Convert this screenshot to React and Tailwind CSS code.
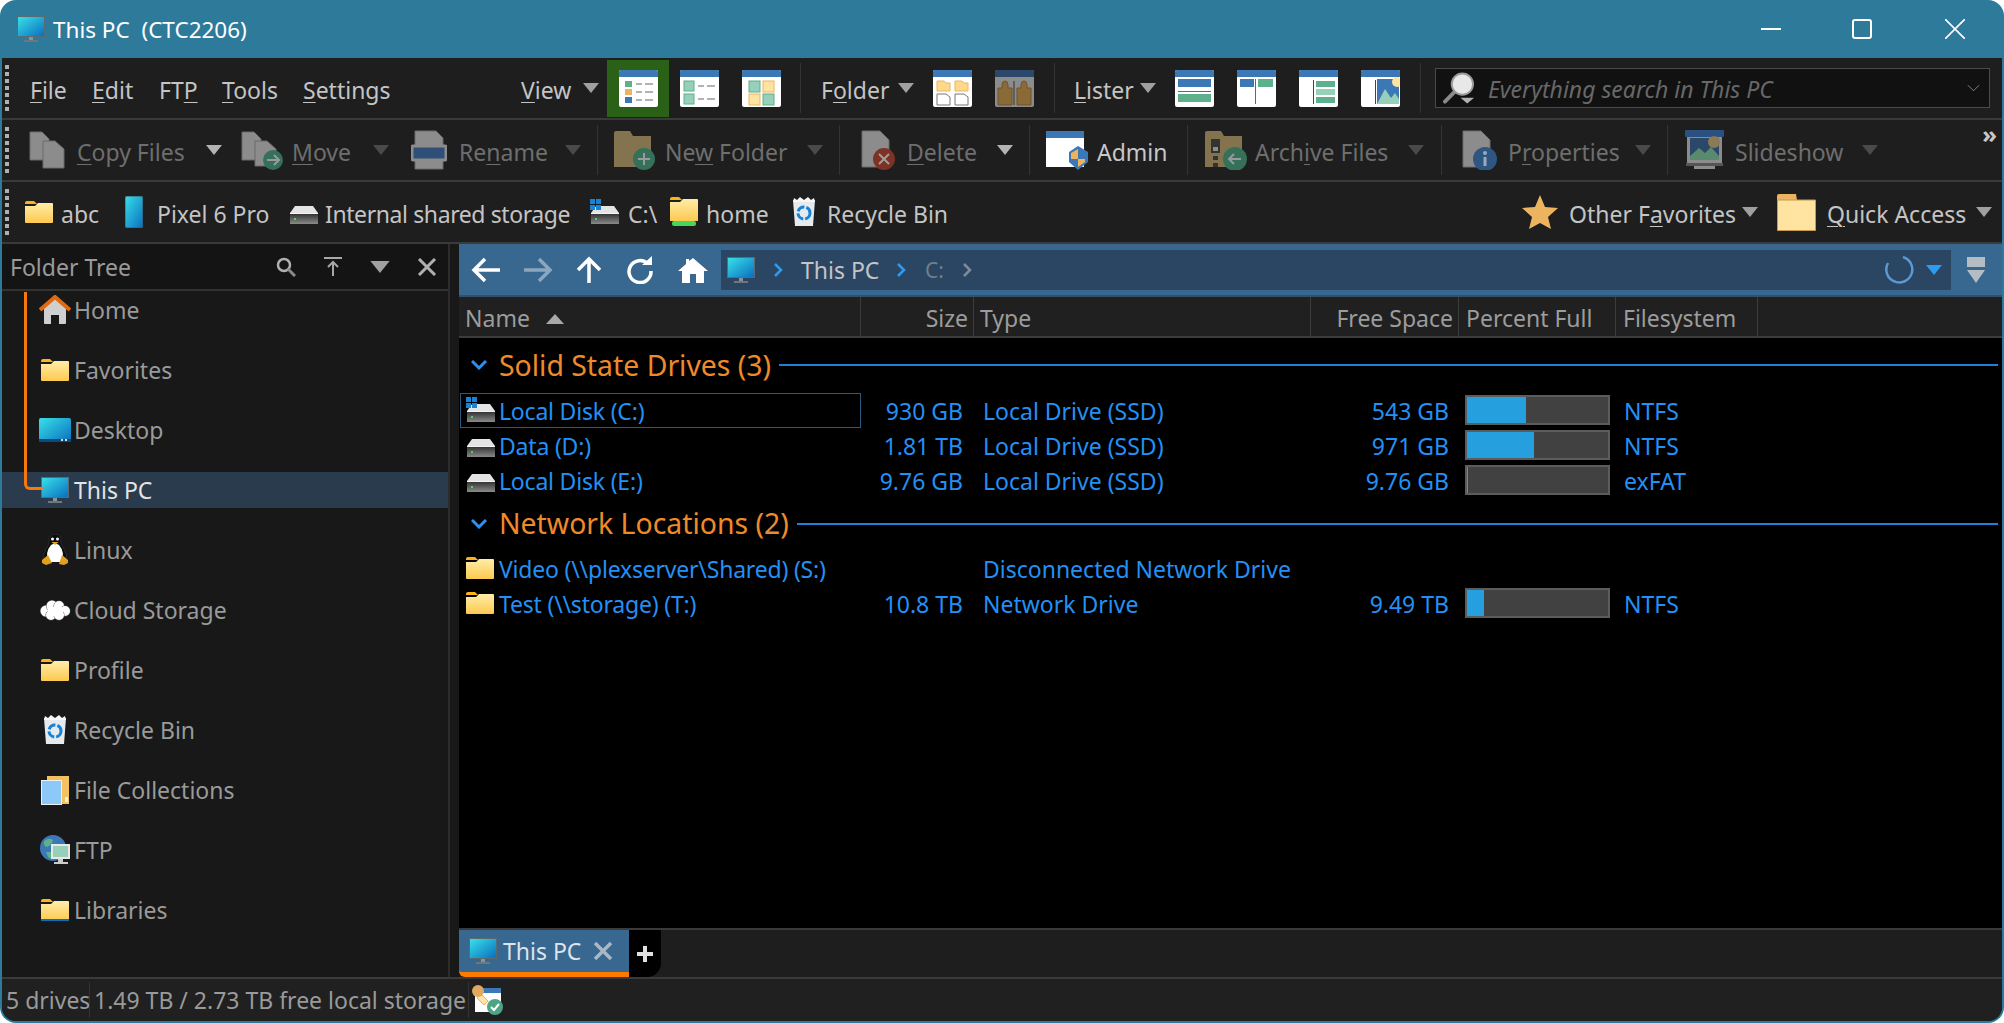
import React from 'react';

const Defs = () => (
  <svg className="absolute w-0 h-0">
    <defs>
      <linearGradient id="screen" x1="0" y1="0" x2="1" y2="1">
        <stop offset="0" stopColor="#38e0e8" />
        <stop offset="1" stopColor="#0a6fc0" />
      </linearGradient>
      <linearGradient id="folder" x1="0" y1="0" x2="0" y2="1">
        <stop offset="0" stopColor="#ffeca8" />
        <stop offset="1" stopColor="#fdc94f" />
      </linearGradient>
      <linearGradient id="drive" x1="0" y1="0" x2="0" y2="1">
        <stop offset="0" stopColor="#2c2c2c" />
        <stop offset="1" stopColor="#8a8a8a" />
      </linearGradient>
    </defs>
  </svg>
);

const Monitor = ({ className = 'w-[28px] h-[28px]' }) => (
  <svg viewBox="0 0 28 28" className={className}>
    <rect x="0" y="1" width="28" height="21" fill="#5a6a72" />
    <rect x="1" y="2" width="26" height="19" fill="url(#screen)" />
    <rect x="12" y="22" width="4" height="3" fill="#8a9298" />
    <rect x="7" y="25" width="14" height="2" fill="#70777c" />
  </svg>
);

const Folder = ({ className = 'w-[28px] h-[22px]', bar }) => (
  <svg viewBox="0 0 28 22" className={className}>
    <path d="M0 2 Q0 0 2 0 H9 L12 3 H0 Z" fill="#fbb31b" />
    <path d="M0 5 H10 L13 2 H27 Q28 2 28 3 V21 Q28 22 27 22 H1 Q0 22 0 21 Z" fill="url(#folder)" />
    {bar && <rect x="0" y="20" width="28" height="2" fill="#0a6fc0" />}
  </svg>
);

const Drive = ({ win }) => (
  <svg viewBox="0 0 30 26" className="w-[30px] h-[26px]">
    <path d="M6 7 H24 L29 14 H1 Z" fill="#e4e4e4" />
    <rect x="1" y="14" width="28" height="11" fill="url(#drive)" />
    <rect x="1" y="14" width="28" height="1" fill="#f4f4f4" />
    <rect x="5" y="19" width="2" height="2" fill="#3fe04f" />
    {win && (
      <g fill="#1583d8">
        <rect x="0" y="0" width="5" height="5" />
        <rect x="6" y="0" width="5" height="5" />
        <rect x="0" y="6" width="5" height="5" />
        <rect x="6" y="6" width="5" height="5" />
      </g>
    )}
  </svg>
);

const Recycle = ({ className = 'w-[24px] h-[30px]' }) => (
  <svg viewBox="0 0 24 30" className={className}>
    <path d="M1 3 H23 L21 29 H3 Z" fill="#e4eaee" />
    <path d="M2 1 L5 3 L8 0 L12 3 L16 0 L19 3 L22 1 L23 5 H1 Z" fill="#f6f6f6" />
    <circle cx="12" cy="16" r="6" fill="none" stroke="#1583d8" strokeWidth="3" strokeDasharray="8 2" />
  </svg>
);

const Tri = ({ color = '#a0a0a0', className = 'w-[16px] h-[10px]' }) => (
  <svg viewBox="0 0 16 10" className={className}>
    <path d="M0 0 H16 L8 10 Z" fill={color} />
  </svg>
);

const Win = ({ children, top = '#3b78b5', body = '#ffffff' }) => (
  <svg viewBox="0 0 39 37" className="w-[39px] h-[37px] shrink-0">
    <rect x="0" y="0" width="39" height="37" rx="2" fill={body} />
    <path d="M0 7 V2 Q0 0 2 0 H37 Q39 0 39 2 V7 Z" fill={top} />
    {children}
  </svg>
);

const dashes = (
  <g stroke="#666" strokeWidth="1">
    <path d="M17 14 H23 M26 14 H34 M17 22 H23 M26 22 H34 M17 30 H23 M26 30 H34" />
  </g>
);

const DetailsIcon = () => (
  <Win>
    <rect x="6" y="11" width="7" height="6" fill="#5cb08c" />
    <rect x="6" y="19" width="7" height="6" fill="#edb45f" />
    <rect x="6" y="27" width="7" height="6" fill="#3b78b5" />
    {dashes}
  </Win>
);

const ListIcon = () => (
  <Win>
    <rect x="4" y="11" width="10" height="10" fill="#97d0b8" stroke="#5cb08c" />
    <rect x="4" y="24" width="10" height="10" fill="#97d0b8" stroke="#5cb08c" />
    <path d="M18 16 H24 M27 16 H35 M18 29 H24 M27 29 H35" stroke="#666" />
  </Win>
);

const TilesIcon = () => (
  <Win>
    <rect x="7" y="11" width="11" height="11" fill="#97d0b8" stroke="#5cb08c" />
    <rect x="21" y="11" width="11" height="11" fill="#ffe3a0" stroke="#edb45f" />
    <rect x="7" y="24" width="11" height="11" fill="#ffe3a0" stroke="#edb45f" />
    <rect x="21" y="24" width="11" height="11" fill="#97d0b8" stroke="#5cb08c" />
  </Win>
);

const DualIcon = () => (
  <Win>
    <path d="M4 11 H11 L13 13 H17 V21 H4 Z" fill="#ffd98a" stroke="#edb45f" />
    <path d="M22 11 H29 L31 13 H35 V21 H22 Z" fill="#ffd98a" stroke="#edb45f" />
    <path d="M4 24 H13 L17 27 V35 H4 Z" fill="#fff" stroke="#777" />
    <path d="M22 24 H31 L35 27 V35 H22 Z" fill="#fff" stroke="#777" />
  </Win>
);

const LockIcon = () => (
  <Win top="#2b476a" body="#8c8c8c">
    <path d="M19 11 V35" stroke="#333" />
    <g fill="#8a6a37" stroke="#6f552b">
      <path d="M3 35 V18 H7 V15 Q7 11 10 11 Q13 11 13 15 V18 H17 V35 Z" />
      <path d="M22 35 V18 H26 V15 Q26 11 29 11 Q32 11 32 15 V18 H36 V35 Z" />
    </g>
  </Win>
);

const ListerA = () => (
  <Win>
    <rect x="3" y="9" width="33" height="8" fill="#3b78b5" />
    <rect x="3" y="21" width="33" height="1" fill="#666" />
    <rect x="3" y="24" width="33" height="8" fill="#5cb08c" />
  </Win>
);

const ListerB = () => (
  <Win>
    <rect x="3" y="9" width="14" height="8" fill="#3b78b5" />
    <rect x="21" y="9" width="15" height="8" fill="#5cb08c" />
    <rect x="18" y="9" width="1" height="25" fill="#666" />
  </Win>
);

const ListerC = () => (
  <Win>
    <rect x="14" y="10" width="1" height="24" fill="#444" />
    <rect x="17" y="11" width="19" height="6" fill="#5cb08c" />
    <rect x="17" y="19" width="19" height="6" fill="#97d0b8" />
    <rect x="17" y="27" width="19" height="6" fill="#5cb08c" />
  </Win>
);

const ListerD = () => (
  <Win>
    <rect x="14" y="10" width="1" height="24" fill="#444" />
    <rect x="16" y="9" width="22" height="25" fill="#3b78b5" />
    <circle cx="36" cy="12" r="5" fill="#ffe3a0" />
    <path d="M16 34 L24 19 L30 28 L34 23 L38 29 V34 Z" fill="#97d0b8" />
  </Win>
);

const Sheet = ({ children, w = 36 }) => (
  <svg viewBox={`0 0 ${w} 40`} className="shrink-0" style={{ width: w, height: 40 }}>
    {children}
  </svg>
);

const CopyIcon = () => (
  <Sheet>
    <path d="M1 2 H13 L20 9 V30 H1 Z" fill="#8c8c8c" stroke="#6a6a6a" />
    <path d="M14 11 H26 L35 19 V38 H14 Z" fill="#8c8c8c" stroke="#6a6a6a" />
  </Sheet>
);

const MoveIcon = () => (
  <Sheet w={42}>
    <path d="M1 2 H13 L20 9 V30 H1 Z" fill="#8c8c8c" stroke="#6a6a6a" />
    <path d="M14 11 H26 L35 19 V36 H14 Z" fill="#8c8c8c" stroke="#6a6a6a" />
    <circle cx="32" cy="30" r="10" fill="#35705a" />
    <path d="M26 30 H37 M33 25 L38 30 L33 35" stroke="#9a9a9a" strokeWidth="2" fill="none" />
  </Sheet>
);

const RenameIcon = () => (
  <Sheet>
    <path d="M4 1 H25 L32 8 V39 H4 Z" fill="#8c8c8c" stroke="#6a6a6a" />
    <rect x="1" y="16" width="34" height="14" rx="1" fill="#2f4e78" stroke="#8c8c8c" strokeWidth="3" />
  </Sheet>
);

const NewFolderIcon = () => (
  <Sheet w={43}>
    <path d="M1 3 Q1 1 3 1 H17 L20 6 H38 V37 H1 Z" fill="#83744f" />
    <circle cx="31" cy="29" r="11" fill="#35705a" />
    <path d="M31 23 V35 M25 29 H37" stroke="#9a9a9a" strokeWidth="2" />
  </Sheet>
);

const DeleteIcon = () => (
  <Sheet>
    <path d="M1 1 H19 L28 10 V37 H1 Z" fill="#8c8c8c" stroke="#6a6a6a" />
    <circle cx="23" cy="29" r="11" fill="#7c3226" />
    <path d="M18 24 L28 34 M28 24 L18 34" stroke="#a89a96" strokeWidth="2" />
  </Sheet>
);

const AdminIcon = () => (
  <Sheet w={43}>
    <rect x="0" y="1" width="38" height="36" fill="#ffffff" />
    <rect x="0" y="1" width="38" height="7" fill="#3b78b5" />
    <path d="M32 16 L42 22 V32 L32 40 L23 32 V22 Z" fill="#3b78b5" />
    <path d="M32 19 V29 H25 V23 Z M32 29 H39 V32 L32 37 Z" fill="#edb45f" />
  </Sheet>
);

const ArchiveIcon = () => (
  <Sheet w={43}>
    <path d="M1 3 Q1 1 3 1 H17 L20 6 H38 V37 H1 Z" fill="#83744f" />
    <rect x="7" y="9" width="9" height="14" fill="#333" />
    <rect x="9" y="17" width="5" height="4" fill="#8c8c8c" />
    <rect x="9" y="26" width="5" height="4" fill="#333" />
    <rect x="9" y="33" width="5" height="4" fill="#333" />
    <circle cx="31" cy="29" r="12" fill="#35705a" />
    <path d="M37 29 H25 M30 24 L25 29 L30 34" stroke="#9a9a9a" strokeWidth="2" fill="none" />
  </Sheet>
);

const PropsIcon = () => (
  <Sheet>
    <path d="M1 1 H19 L28 10 V37 H1 Z" fill="#8c8c8c" stroke="#6a6a6a" />
    <circle cx="23" cy="29" r="12" fill="#2f5680" />
    <rect x="21.5" y="27" width="3" height="9" fill="#9ab" />
    <circle cx="23" cy="23" r="2" fill="#9ab" />
  </Sheet>
);

const SlideIcon = () => (
  <Sheet w={39}>
    <rect x="0" y="0" width="39" height="7" rx="1" fill="#2b5080" />
    <rect x="2" y="7" width="35" height="26" fill="#8c8c8c" />
    <rect x="5" y="8" width="29" height="22" fill="#2b476a" />
    <circle cx="29" cy="12" r="6" fill="#8a7a55" />
    <path d="M5 30 V26 L14 18 L20 23 L26 17 L34 26 V30 Z" fill="#5a8a6e" />
    <rect x="1" y="33" width="37" height="3" fill="#555" />
    <rect x="9" y="36" width="21" height="3" fill="#8c8c8c" />
  </Sheet>
);

const Grip = () => (
  <div className="ml-[3px] w-[4px] h-[46px] shrink-0 flex flex-col justify-between">
    {[0, 1, 2, 3, 4, 5, 6].map((i) => (
      <span key={i} className="block w-[4px] h-[4px] bg-[#b0b0b0]" />
    ))}
  </div>
);

const Sep = ({ className }) => <div className={`w-px h-[50px] bg-[#333333] shrink-0 ${className}`} />;

// underlines the mnemonic character at position m
const Label = ({ text, m }) => {
  if (m === undefined) return <span className="inline-block pt-[4px]">{text}</span>;
  return (
    <span className="inline-block pt-[4px]">
      {text.slice(0, m)}
      <u className="underline underline-offset-[3px] decoration-1">{text[m]}</u>
      {text.slice(m + 1)}
    </span>
  );
};

const Tool = ({ icon, text, m, className, gap = 'ml-[12px]', arrow }) => (
  <div className={`flex items-center shrink-0 text-[#6e6e6e] ${className}`}>
    {icon}
    <span className={`${gap} whitespace-nowrap`}>
      <Label text={text} m={m} />
    </span>
    {arrow && <span className="ml-auto"><Tri color={arrow} /></span>}
  </div>
);

const MenuBar = () => (
  <div className="h-[62px] flex items-center border-b-2 border-[#3a3a3a] text-[23px] text-[#c4c4c4]">
    <Grip />
    <span className="ml-[21px] w-[62px]"><Label text="File" m={0} /></span>
    <span className="w-[67px]"><Label text="Edit" m={0} /></span>
    <span className="w-[63px]"><Label text="FTP" m={2} /></span>
    <span className="w-[81px]"><Label text="Tools" m={0} /></span>
    <span className="w-[218px]"><Label text="Settings" m={0} /></span>
    <span className="w-[62px]"><Label text="View" m={0} /></span>
    <span className="w-[24px]"><Tri /></span>
    <div className="w-[62px] h-[57px] bg-[#2a6116] flex items-center justify-center"><DetailsIcon /></div>
    <div className="ml-[11px]"><ListIcon /></div>
    <div className="ml-[23px]"><TilesIcon /></div>
    <Sep className="ml-[19px]" />
    <span className="ml-[20px] w-[77px]"><Label text="Folder" m={1} /></span>
    <span><Tri /></span>
    <div className="ml-[19px]"><DualIcon /></div>
    <div className="ml-[23px]"><LockIcon /></div>
    <Sep className="ml-[20px]" />
    <span className="ml-[19px] w-[66px]"><Label text="Lister" m={0} /></span>
    <span><Tri /></span>
    <div className="ml-[19px]"><ListerA /></div>
    <div className="ml-[23px]"><ListerB /></div>
    <div className="ml-[23px]"><ListerC /></div>
    <div className="ml-[23px]"><ListerD /></div>
    <Sep className="ml-[20px]" />
    <div className="ml-[14px] w-[555px] h-[40px] bg-[#111111] border border-[#4a4a4a] flex items-center">
      <svg viewBox="0 0 34 34" className="ml-[6px] w-[33px] h-[34px]">
        <path d="M3 31 L14 20" stroke="#8a8a8a" strokeWidth="4" strokeLinecap="round" />
        <circle cx="21" cy="13" r="11" fill="#e8e8e8" stroke="#9a9a9a" strokeWidth="2" />
        <path d="M19 27 H33 L26 33 Z" fill="#b0b0b0" />
      </svg>
      <span className="ml-[13px] pt-[2px] italic text-[#686868] text-[23px]">Everything search in This PC</span>
      <svg viewBox="0 0 14 8" className="ml-auto mr-[9px] w-[13px] h-[8px]">
        <path d="M1 1 L7 7 L13 1" stroke="#8a8a8a" fill="none" />
      </svg>
    </div>
  </div>
);

const ActionBar = () => (
  <div className="h-[62px] flex items-center border-b-2 border-[#3a3a3a] text-[23px] relative">
    <Grip />
    <Tool className="ml-[20px] w-[193px]" icon={<CopyIcon />} text="Copy Files" m={0} arrow="#b4b4b4" />
    <Tool className="ml-[19px] w-[148px]" gap="ml-[9px]" icon={<MoveIcon />} text="Move" m={0} arrow="#4a4a4a" />
    <Tool className="ml-[22px] w-[170px]" icon={<RenameIcon />} text="Rename" m={2} arrow="#4a4a4a" />
    <Sep className="ml-[16px]" />
    <Tool className="ml-[15px] w-[210px]" gap="ml-[9px]" icon={<NewFolderIcon />} text="New Folder" m={2} arrow="#4a4a4a" />
    <Sep className="ml-[16px]" />
    <Tool className="ml-[21px] w-[152px]" gap="ml-[10px]" icon={<DeleteIcon />} text="Delete" m={0} arrow="#b4b4b4" />
    <Sep className="ml-[16px]" />
    <div className="ml-[16px] w-[141px] flex items-center text-[#c8c8c8]">
      <AdminIcon />
      <span className="ml-[8px]"><Label text="Admin" /></span>
    </div>
    <Sep />
    <Tool className="ml-[16px] w-[220px]" gap="ml-[8px]" icon={<ArchiveIcon />} text="Archive Files" m={4} arrow="#4a4a4a" />
    <Sep className="ml-[17px]" />
    <Tool className="ml-[20px] w-[189px]" gap="ml-[10px]" icon={<PropsIcon />} text="Properties" m={1} arrow="#4a4a4a" />
    <Sep className="ml-[16px]" />
    <Tool className="ml-[17px] w-[193px]" gap="ml-[11px]" icon={<SlideIcon />} text="Slideshow" arrow="#4a4a4a" />
    <span className="absolute right-[5px] top-[2px] text-[#c8c8c8] text-[24px] leading-none font-bold">»</span>
  </div>
);

const Fav = ({ icon, text, className, gap = 'ml-[8px]' }) => (
  <div className={`flex items-center shrink-0 ${className}`}>
    {icon}
    <span className={gap}><Label text={text} /></span>
  </div>
);

const FavBar = () => (
  <div className="h-[62px] flex items-center text-[23px] text-[#c4c4c4] border-b-2 border-[#3a3a3a]">
    <Grip />
    <Fav className="ml-[16px] w-[100px]" icon={<Folder />} text="abc" />
    <Fav className="w-[164px]" icon={
      <svg viewBox="0 0 18 32" className="w-[18px] h-[32px] mr-[6px]">
        <rect x="0" y="0" width="18" height="32" rx="2" fill="url(#screen)" stroke="#455" />
      </svg>
    } text="Pixel 6 Pro" />
    <Fav className="w-[301px] tracking-[-0.4px]" gap="ml-[6px]" icon={<Drive />} text="Internal shared storage" />
    <Fav className="w-[80px]" icon={<Drive win />} text="C:\" />
    <Fav className="w-[122px]" icon={
      <svg viewBox="0 0 28 30" className="w-[28px] h-[30px]">
        <path d="M0 2 Q0 0 2 0 H9 L12 3 H0 Z" fill="#fbb31b" />
        <path d="M0 5 H10 L13 2 H27 Q28 2 28 3 V24 H0 Z" fill="url(#folder)" />
        <rect x="2" y="24" width="24" height="5" rx="2" fill="#45d65a" />
      </svg>
    } text="home" />
    <Fav icon={<Recycle />} gap="ml-[11px]" text="Recycle Bin" />
    <div className="ml-auto flex items-center">
      <svg viewBox="0 0 38 36" className="w-[38px] h-[36px]">
        <path d="M19 1 L24 13 L37 14 L27 23 L30 35 L19 29 L8 35 L11 23 L1 14 L14 13 Z" fill="#ecb45f" />
      </svg>
      <span className="ml-[10px] w-[173px] whitespace-nowrap"><Label text="Other Favorites" m={7} /></span>
      <span><Tri /></span>
      <svg viewBox="0 0 39 38" className="ml-[19px] w-[39px] h-[38px]">
        <path d="M0 3 Q0 1 2 1 H19 L20 7 H0 Z" fill="#ecb45f" />
        <path d="M0.5 7 H20 V7 H38.5 V37.5 H0.5 Z" fill="#ffe3a0" stroke="#c89a4e" />
      </svg>
      <span className="ml-[11px] w-[149px] whitespace-nowrap"><Label text="Quick Access" m={0} /></span>
      <span className="mr-[10px]"><Tri /></span>
    </div>
  </div>
);

const PenguinIcon = () => (
  <svg viewBox="0 0 28 32" className="w-[28px] h-[32px]">
    <path d="M14 0 Q20 0 20 8 Q20 11 23 15 Q27 21 25 27 L3 27 Q1 21 5 15 Q8 11 8 8 Q8 0 14 0 Z" fill="#0c0c0c" stroke="#2a2a2a" />
    <path d="M10 11 Q14 8 18 11 Q24 18 21 28 L7 28 Q4 18 10 11 Z" fill="#ffffff" />
    <circle cx="11.5" cy="5" r="1.5" fill="#ffffff" />
    <circle cx="16.5" cy="5" r="1.5" fill="#ffffff" />
    <path d="M10.5 8 H17.5 L14 11 Z" fill="#e8a020" />
    <path d="M1 26 L7 21 L11 29 L5 31 L1 29 Z M27 26 L21 21 L18 30 L23 31 L27 29 Z" fill="#e0a020" />
  </svg>
);

const TreeIcons = {
  home: (
    <svg viewBox="0 0 32 30" className="w-[32px] h-[30px]">
      <path d="M5 13 L16 3 L27 13 V28 Q27 29 26 29 H20 V20 H12 V29 H6 Q5 29 5 28 Z" fill="#cfcfcf" />
      <path d="M1 15 L16 2 L31 15" fill="none" stroke="#e06a10" strokeWidth="4" />
    </svg>
  ),
  folder: <Folder />,
  desktop: (
    <svg viewBox="0 0 32 24" className="w-[32px] h-[24px]">
      <rect x="0" y="0" width="32" height="24" rx="2" fill="url(#screen)" />
      <rect x="0" y="21" width="32" height="3" fill="#0a4a80" />
      <rect x="22" y="21" width="2" height="2" fill="#ddd" />
      <rect x="26" y="21" width="2" height="2" fill="#ddd" />
    </svg>
  ),
  pc: <Monitor />,
  linux: <PenguinIcon />,
  cloud: (
    <svg viewBox="0 0 32 22" className="w-[32px] h-[22px]">
      <g fill="#ffffff" stroke="#555555" strokeWidth="1" paintOrder="stroke">
        <circle cx="7" cy="12" r="5.5" />
        <circle cx="13" cy="7" r="5.5" />
        <circle cx="20" cy="7" r="5" />
        <circle cx="26" cy="12" r="5" />
        <circle cx="12" cy="16" r="5" />
        <circle cx="20" cy="16" r="5" />
      </g>
      <rect x="9" y="8" width="15" height="9" fill="#ffffff" />
    </svg>
  ),
  recycle: <Recycle />,
  collections: (
    <svg viewBox="0 0 28 30" className="w-[28px] h-[30px]">
      <rect x="6" y="1" width="22" height="28" fill="#f3c15f" />
      <rect x="0.5" y="5.5" width="20" height="24" fill="#8cc8f8" stroke="#f0f0f0" />
      <rect x="24" y="22" width="3" height="5" fill="#f0f0f0" />
    </svg>
  ),
  ftp: (
    <svg viewBox="0 0 32 30" className="w-[32px] h-[30px]">
      <circle cx="14" cy="13" r="13" fill="#3b78b5" />
      <path d="M5 6 Q10 2 14 5 Q13 10 8 12 Q4 11 5 6 Z M7 17 L12 17 L12 24 L9 22 Z" fill="#5cb08c" />
      <rect x="12" y="9" width="19" height="15" fill="#e8e8e8" />
      <rect x="14" y="11" width="15" height="11" fill="#97d0b8" />
      <rect x="19" y="24" width="5" height="3" fill="#ccc" />
      <rect x="15" y="27" width="14" height="2" fill="#ccc" />
    </svg>
  ),
  libraries: <Folder className="w-[28px] h-[24px]" bar />,
};

const treeItems = [
  ['home', 'Home'],
  ['folder', 'Favorites'],
  ['desktop', 'Desktop'],
  ['pc', 'This PC'],
  ['linux', 'Linux'],
  ['cloud', 'Cloud Storage'],
  ['folder', 'Profile'],
  ['recycle', 'Recycle Bin'],
  ['collections', 'File Collections'],
  ['ftp', 'FTP'],
  ['libraries', 'Libraries'],
];

const FolderTree = () => (
  <div className="w-[448px] shrink-0 flex flex-col border-r-2 border-[#2c2c2c] bg-[#181818]">
    <div className="h-[47px] shrink-0 flex items-center bg-[#141414] text-[23px] text-[#9a9a9a] border-b-2 border-[#333333] pl-[8px]">
      <span className="pt-[2px]">Folder Tree</span>
      <svg viewBox="0 0 20 20" className="ml-auto w-[20px] h-[20px]">
        <circle cx="8" cy="8" r="6" fill="none" stroke="#b0b0b0" strokeWidth="2.5" />
        <path d="M12 12 L19 19" stroke="#8a8a8a" strokeWidth="3" />
      </svg>
      <svg viewBox="0 0 18 20" className="ml-[28px] w-[18px] h-[20px]">
        <path d="M0 1 H18 M9 19 V6 M4 10 L9 5 L14 10" stroke="#a8a8a8" strokeWidth="2" fill="none" />
      </svg>
      <span className="ml-[27px]"><Tri className="w-[22px] h-[12px]" /></span>
      <svg viewBox="0 0 20 18" className="ml-[26px] mr-[11px] w-[20px] h-[18px]">
        <path d="M2 1 L18 17 M18 1 L2 17" stroke="#b0b0b0" strokeWidth="3" />
      </svg>
    </div>
    <div className="relative flex-1 flex flex-col gap-6 pt-[1px] text-[23px] text-[#9a9a9a]">
      {treeItems.map(([icon, label]) => (
        <div key={label} className={`h-[36px] flex items-center shrink-0 ${label === 'This PC' ? 'bg-[#2a3b4d] text-[#e4e4e4]' : ''}`}>
          <span className="ml-[37px] w-[32px] flex justify-center">{TreeIcons[icon]}</span>
          <span className="ml-[3px]">{label}</span>
        </div>
      ))}
      <div className="absolute left-[22px] top-[1px] w-[19px] h-[198px] border-l-[3px] border-b-[3px] border-[#f47a10] rounded-bl-md" />
    </div>
  </div>
);

const NavBar = () => (
  <div className="h-[53px] shrink-0 bg-[#38678f] flex items-center border-b-2 border-[#33506a]">
    <svg viewBox="0 0 30 28" className="ml-[12px] w-[30px] h-[28px]">
      <path d="M14 3 L3 14 L14 25 M3 14 H29" fill="none" stroke="#ffffff" strokeWidth="3.5" />
    </svg>
    <svg viewBox="0 0 30 28" className="ml-[22px] w-[30px] h-[28px]">
      <path d="M16 3 L27 14 L16 25 M27 14 H1" fill="none" stroke="#8ba7c0" strokeWidth="3.5" />
    </svg>
    <svg viewBox="0 0 28 28" className="ml-[22px] w-[28px] h-[28px]">
      <path d="M3 14 L14 3 L25 14 M14 3 V27" fill="none" stroke="#ffffff" strokeWidth="3.5" />
    </svg>
    <svg viewBox="0 0 28 28" className="ml-[23px] w-[28px] h-[28px]">
      <path d="M22 8 A11 11 0 1 0 25 15" fill="none" stroke="#ffffff" strokeWidth="3.5" />
      <path d="M16 9 H26 V0 Z" fill="#ffffff" />
    </svg>
    <svg viewBox="0 0 30 28" className="ml-[24px] w-[30px] h-[28px]">
      <path d="M15 2 L30 15 H26 V27 H18 V18 H12 V27 H4 V15 H0 L8 8 V3 H11 V5 Z" fill="#ffffff" />
    </svg>
    <div className="ml-[13px] w-[1230px] h-[40px] bg-[#2a4663] flex items-center text-[23px]">
      <span className="ml-[6px]"><Monitor /></span>
      <svg viewBox="0 0 9 14" className="ml-[19px] w-[9px] h-[14px]">
        <path d="M1 1 L7 7 L1 13" fill="none" stroke="#2e9bf0" strokeWidth="2.5" />
      </svg>
      <span className="ml-[18px] w-[96px] pt-[2px] text-[#c4c4c4]">This PC</span>
      <svg viewBox="0 0 9 14" className="w-[9px] h-[14px]">
        <path d="M1 1 L7 7 L1 13" fill="none" stroke="#2e9bf0" strokeWidth="2.5" />
      </svg>
      <span className="ml-[19px] w-[38px] pt-[2px] text-[#6e7f8f] text-[21px]">C:</span>
      <svg viewBox="0 0 9 14" className="w-[9px] h-[14px]">
        <path d="M1 1 L7 7 L1 13" fill="none" stroke="#7c8c9c" strokeWidth="2.5" />
      </svg>
      <svg viewBox="0 0 30 30" className="ml-auto mr-[12px] w-[30px] h-[30px]">
        <path d="M19 2 A13 13 0 1 1 4 8" fill="none" stroke="#5a9ad0" strokeWidth="2.5" />
      </svg>
      <span className="mr-[9px]"><Tri color="#2e9bf0" /></span>
    </div>
    <svg viewBox="0 0 18 26" className="ml-[16px] w-[18px] h-[26px]">
      <rect x="0" y="0" width="18" height="10" fill="#b4bcc4" />
      <path d="M0 13 H18 L9 26 Z" fill="#b4bcc4" />
    </svg>
  </div>
);

const gridCols = 'grid grid-cols-[402px_113px_337px_148px_157px_142px_1fr]';

const ColumnHeader = () => (
  <div className={`${gridCols} h-[41px] shrink-0 bg-[#202020] border-b-2 border-[#3c3c3c] text-[23px] text-[#9c9c9c]`}>
    <div className="border-r border-[#3c3c3c] flex items-center pl-[6px] pt-[4px]">
      Name
      <span className="ml-[16px]"><svg viewBox="0 0 18 10" className="w-[18px] h-[10px]"><path d="M0 10 H18 L9 0 Z" fill="#a8a8a8" /></svg></span>
    </div>
    <div className="border-r border-[#3c3c3c] flex items-center justify-end pr-[5px] pt-[4px]">Size</div>
    <div className="border-r border-[#3c3c3c] flex items-center pl-[6px] pt-[4px]">Type</div>
    <div className="border-r border-[#3c3c3c] flex items-center justify-end pr-[5px] pt-[4px] whitespace-nowrap">Free Space</div>
    <div className="border-r border-[#3c3c3c] flex items-center pl-[7px] pt-[4px] whitespace-nowrap">Percent Full</div>
    <div className="border-r border-[#3c3c3c] flex items-center pl-[7px] pt-[4px]">Filesystem</div>
    <div />
  </div>
);

const GroupHeader = ({ title, className }) => (
  <div className={`flex items-center ${className}`}>
    <svg viewBox="0 0 16 10" className="ml-[12px] w-[16px] h-[10px] shrink-0">
      <path d="M1 1 L8 8 L15 1" fill="none" stroke="#2e8ff0" strokeWidth="3" />
    </svg>
    <span className="ml-[12px] text-[28.4px] text-[#ef8a2a] whitespace-nowrap">{title}</span>
    <div className="ml-[8px] mr-[4px] flex-1 h-[2px] bg-[#1f7fdb]" />
  </div>
);

const Bar = ({ used }) => (
  <div className="ml-[6px] w-[145px] h-[30px] bg-[#414141] border-2 border-[#5c5c5c]">
    <div className="h-full bg-[#259fdd]" style={{ width: used }} />
  </div>
);

const DriveRow = ({ icon, name, size, type, free, used, fs, focus }) => (
  <div className={`${gridCols} h-[35px] items-center text-[23px] text-[#2490f5]`}>
    <div className={`h-[35px] flex items-center whitespace-nowrap ml-px ${focus ? 'border border-[#2a5a80] pl-[5px]' : 'pl-[6px]'}`}>
      <span className="w-[30px] shrink-0">{icon}</span>
      <span className="ml-[3px] pt-[2px] tracking-[-0.2px]">{name}</span>
    </div>
    <div className="text-right pr-[11px] pt-[2px] whitespace-nowrap">{size}</div>
    <div className="pl-[9px] pt-[2px] whitespace-nowrap">{type}</div>
    <div className="text-right pr-[10px] pt-[2px] whitespace-nowrap">{free}</div>
    <div>{used !== undefined && <Bar used={used} />}</div>
    <div className="pl-[8px] pt-[2px]">{fs}</div>
    <div />
  </div>
);

const FileList = () => (
  <div className="flex-1 bg-black flex flex-col">
    <GroupHeader title="Solid State Drives (3)" className="h-[54px]" />
    <DriveRow focus icon={<Drive win />} name="Local Disk (C:)" size="930 GB" type="Local Drive (SSD)" free="543 GB" used={59} fs="NTFS" />
    <DriveRow icon={<Drive />} name="Data (D:)" size="1.81 TB" type="Local Drive (SSD)" free="971 GB" used={67} fs="NTFS" />
    <DriveRow icon={<Drive />} name="Local Disk (E:)" size="9.76 GB" type="Local Drive (SSD)" free="9.76 GB" used={1} fs="exFAT" />
    <GroupHeader title="Network Locations (2)" className="h-[53px]" />
    <DriveRow icon={<Folder />} name="Video (\\plexserver\Shared) (S:)" type="Disconnected Network Drive" />
    <DriveRow icon={<Folder />} name="Test (\\storage) (T:)" size="10.8 TB" type="Network Drive" free="9.49 TB" used={17} fs="NTFS" />
  </div>
);

const TabBar = () => (
  <div className="h-[49px] shrink-0 flex bg-[#1e1e1e] border-t-2 border-[#3a3a3a]">
    <div className="w-[170px] flex items-center bg-[#38678f] border-b-[5px] border-[#ff7a00] rounded-bl-md text-[23px] text-[#dce4ec]">
      <span className="ml-[10px]"><Monitor /></span>
      <span className="ml-[6px] whitespace-nowrap">This PC</span>
      <svg viewBox="0 0 20 18" className="ml-auto mr-[16px] w-[20px] h-[18px]">
        <path d="M2 1 L18 17 M18 1 L2 17" stroke="#a9b8c6" strokeWidth="3.5" />
      </svg>
    </div>
    <div className="w-[32px] bg-black rounded-br-[14px] flex items-center justify-center">
      <svg viewBox="0 0 16 16" className="w-[16px] h-[16px]">
        <path d="M8 0 V16 M0 8 H16" stroke="#e0e0e0" strokeWidth="4" />
      </svg>
    </div>
  </div>
);

const StatusBar = () => (
  <div className="h-[44px] shrink-0 flex items-center bg-[#202020] border-t-2 border-[#3a3a3a] text-[23px] text-[#9a9a9a]">
    <span className="ml-[4px] w-[83px] whitespace-nowrap">5 drives</span>
    <div className="w-px h-[36px] bg-[#333333]" />
    <span className="ml-[4px] w-[374px] whitespace-nowrap">1.49 TB / 2.73 TB free local storage</span>
    <div className="w-px h-[36px] bg-[#333333]" />
    <svg viewBox="0 0 32 30" className="ml-[3px] w-[32px] h-[30px]">
      <rect x="3" y="3" width="26" height="24" fill="#fff" />
      <rect x="3" y="3" width="26" height="5" fill="#3b78b5" />
      <path d="M8 8 L16 16 L12 20 L5 13 Z" fill="#ffe3a0" stroke="#edb45f" />
      <circle cx="6" cy="6" r="6" fill="#e0a860" />
      <circle cx="23" cy="22" r="8" fill="#4fa583" />
      <path d="M19 22 L22 25 L27 19" fill="none" stroke="#fff" strokeWidth="2" />
    </svg>
  </div>
);

export default function App() {
  return (
    <div className="w-[2004px] h-[1023px] bg-white font-['Noto_Sans','Liberation_Sans',sans-serif]">
      <Defs />
      <div className="w-full h-full rounded-[16px] overflow-hidden bg-[#2d7a9b] flex flex-col px-[2px] pb-[2px]">
        <div className="h-[58px] shrink-0 flex items-center text-[22.5px] text-white">
          <span className="ml-[15px]"><Monitor /></span>
          <span className="ml-[8px] pt-[2px] whitespace-pre">This PC  (CTC2206)</span>
          <svg viewBox="0 0 20 2" className="ml-auto w-[20px] h-[2px]">
            <rect width="20" height="2" fill="#ffffff" />
          </svg>
          <svg viewBox="0 0 20 20" className="ml-[71px] w-[20px] h-[20px]">
            <rect x="1" y="1" width="18" height="18" rx="2" fill="none" stroke="#ffffff" strokeWidth="2" />
          </svg>
          <svg viewBox="0 0 20 20" className="ml-[73px] mr-[37px] w-[20px] h-[20px]">
            <path d="M0 0 L20 20 M20 0 L0 20" stroke="#ffffff" strokeWidth="1.6" />
          </svg>
        </div>
        <div className="flex-1 min-h-0 flex flex-col bg-[#1e1e1e] rounded-b-[14px] overflow-hidden">
          <MenuBar />
          <ActionBar />
          <FavBar />
          <div className="flex-1 min-h-0 flex">
            <FolderTree />
            <div className="w-[9px] shrink-0 bg-[#181818]" />
            <div className="flex-1 min-w-0 flex flex-col">
              <NavBar />
              <ColumnHeader />
              <FileList />
              <TabBar />
            </div>
          </div>
          <StatusBar />
        </div>
      </div>
    </div>
  );
}
